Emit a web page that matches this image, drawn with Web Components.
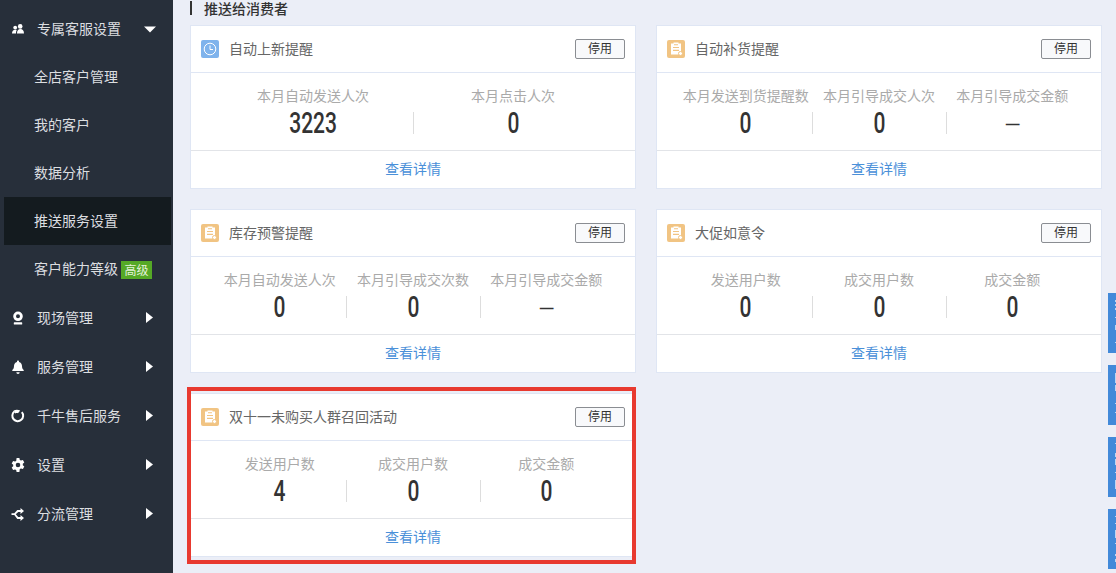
<!DOCTYPE html>
<html lang="zh">
<head>
<meta charset="utf-8">
<title>推送服务设置</title>
<style>
  html, body {
    margin: 0;
    height: 100%;
    overflow: hidden;
    background: #ebeef7;
    font-family: "Noto Sans CJK SC", "Liberation Sans", sans-serif;
  }
</style>
</head>
<body>
<app-shell>
  <side-menu slot="menu">
    <nav-item label="专属客服设置" arrow="down" short>
      <svg slot="icon" viewBox="0 0 14 14"><circle cx="4.200" cy="5.600" r="1.900"/><circle cx="9.200" cy="4.400" r="2.300"/><path d="M1 11.500c0-2.200 1.200-3.800 3.200-3.800 .7 0 1.200.2 1.600.4-.6.8-.8 2-.8 3.400zM6 11.500c0-2.800 1.200-4.500 3.400-4.500s3.600 1.700 3.600 4.500z"/></svg>
    </nav-item>
    <sub-item>全店客户管理</sub-item>
    <sub-item>我的客户</sub-item>
    <sub-item>数据分析</sub-item>
    <sub-item active>推送服务设置</sub-item>
    <sub-item badge="高级">客户能力等级</sub-item>
    <nav-item label="现场管理" arrow="right">
      <svg slot="icon" viewBox="0 0 14 14"><path fill-rule="evenodd" d="M7 .5a4.800 4.800 0 1 1 0 9.600 4.800 4.800 0 0 1 0-9.600zm0 2.800a2 2 0 1 0 0 4 2 2 0 0 0 0-4z"/><rect x="2.800" y="11.300" width="8.400" height="2.200" rx=".6"/></svg>
    </nav-item>
    <nav-item label="服务管理" arrow="right">
      <svg slot="icon" viewBox="0 0 14 14"><path d="M7 .4c.6 0 1 .4 1 1v.5c1.900.5 3 2.100 3 4.200 0 2 .6 3 1.700 4v1H1.300v-1c1.100-1 1.700-2 1.700-4 0-2.100 1.100-3.700 3-4.200v-.5c0-.6.4-1 1-1zM5.300 12.300h3.400a1.700 1.700 0 0 1-3.400 0z"/></svg>
    </nav-item>
    <nav-item label="千牛售后服务" arrow="right">
      <svg slot="icon" viewBox="0 0 14 14"><path fill="none" stroke="#fff" stroke-width="2" d="M3.300 2.600A5.400 5.400 0 1 0 10.800 3.200"/><path d="M2.600 1.500C4.800.4 7.200.4 9.200 1.600L7 4.200C6 3.900 5.200 4 4.200 4.500z"/></svg>
    </nav-item>
    <nav-item label="设置" arrow="right">
      <svg slot="icon" viewBox="0 0 14 14"><path fill-rule="evenodd" d="M5.600 0h2.800l.4 1.900 1.200.7 1.900-.6L13.300 4.400l-1.500 1.300v1.600l1.500 1.300-1.400 2.400-1.900-.6-1.200.7L8.400 14H5.600l-.4-1.900-1.200-.7-1.900.6L.7 9.600l1.500-1.300V6.700L.7 5.400 2.100 3l1.900.6 1.200-.7zM7 4.700a2.300 2.300 0 1 0 0 4.600 2.300 2.300 0 0 0 0-4.600z"/></svg>
    </nav-item>
    <nav-item label="分流管理" arrow="right">
      <svg slot="icon" viewBox="0 0 14 14"><path d="M.5 6.300h2.800l3-3.300h3.200V1l3.500 3-3.500 3V4.900H7.200L4.800 7.200l2.400 2.900h2.300V8l3.500 3-3.500 3v-2H6.300l-3-3.900H.5z"/></svg>
    </nav-item>
  </side-menu>

  <section-title>推送给消费者</section-title>
  <card-grid>
    <push-card title="自动上新提醒" icon="clock">
      <stat-col label="本月自动发送人次" value="3223"></stat-col>
      <stat-col label="本月点击人次" value="0"></stat-col>
    </push-card>
    <push-card title="自动补货提醒">
      <stat-col label="本月发送到货提醒数" value="0"></stat-col>
      <stat-col label="本月引导成交人次" value="0"></stat-col>
      <stat-col label="本月引导成交金额" value="—"></stat-col>
    </push-card>
    <push-card title="库存预警提醒">
      <stat-col label="本月自动发送人次" value="0"></stat-col>
      <stat-col label="本月引导成交次数" value="0"></stat-col>
      <stat-col label="本月引导成交金额" value="—"></stat-col>
    </push-card>
    <push-card title="大促如意令">
      <stat-col label="发送用户数" value="0"></stat-col>
      <stat-col label="成交用户数" value="0"></stat-col>
      <stat-col label="成交金额" value="0"></stat-col>
    </push-card>
    <push-card title="双十一未购买人群召回活动" highlight>
      <stat-col label="发送用户数" value="4"></stat-col>
      <stat-col label="成交用户数" value="0"></stat-col>
      <stat-col label="成交金额" value="0"></stat-col>
    </push-card>
  </card-grid>

  <edge-tabs slot="edge"></edge-tabs>
</app-shell>

<script>
class AppShell extends HTMLElement {
  constructor() {
    super();
    this.attachShadow({ mode: 'open' });
    this.shadowRoot.innerHTML = `
      <style>
        :host {
          display: grid;
          grid-template-columns: 173px 1fr;
          height: 573px;
          overflow: hidden;
        }

        #main {
          padding: 0 14px 0 17px;
        }
      </style>

      <slot name="menu"></slot>
      <div id="main"><slot></slot></div>
      <slot name="edge"></slot>
    `;
  }
}

class SideMenu extends HTMLElement {
  constructor() {
    super();
    this.attachShadow({ mode: 'open' });
    this.shadowRoot.innerHTML = `
      <style>
        :host {
          display: block;
          box-sizing: border-box;
          height: 573px;
          padding-top: 5px;
          background: #272f3a;
        }
      </style>

      <slot></slot>
    `;
  }
}

class NavItem extends HTMLElement {
  constructor() {
    super();
    this.attachShadow({ mode: 'open' });
    const arrow = this.getAttribute('arrow');
    this.shadowRoot.innerHTML = `
      <style>
        :host {
          display: flex;
          align-items: center;
          height: 49px;
          padding-left: 11px;
          color: #dcdee0;
          font-size: 14px;
        }

        :host([short]) {
          height: 48px;
        }

        #icon {
          display: flex;
          width: 14px;
          height: 14px;
          margin-right: 12px;
        }

        ::slotted(svg) {
          width: 14px;
          height: 14px;
          fill: #fff;
        }

        #label {
          flex: 1;
          padding-bottom: 2px;
        }

        #arrow {
          width: 12px;
          height: 11px;
          margin-right: 17px;
          fill: #fff;
        }
      </style>

      <span id="icon"><slot name="icon"></slot></span>
      <span id="label">${this.getAttribute('label')}</span>
      <svg id="arrow" viewBox="0 0 12 11">
        <path d="${arrow === 'down' ? 'M0 2.500h12L6 8.500z' : 'M2 0l7 5.500L2 11z'}"/>
      </svg>
    `;
  }
}

class SubItem extends HTMLElement {
  constructor() {
    super();
    this.attachShadow({ mode: 'open' });
    const badge = this.getAttribute('badge');
    this.shadowRoot.innerHTML = `
      <style>
        :host {
          display: flex;
          align-items: center;
          box-sizing: border-box;
          height: 48px;
          margin: 0 2px 0 4px;
          padding: 0 0 2px 30px;
          color: #dcdee0;
          font-size: 14px;
        }

        :host([active]) {
          background: #141b1f;
        }

        #badge {
          width: 31px;
          height: 18px;
          margin: 4px 0 0 3px;
          background: #55a926;
          color: #e6f2dc;
          font-size: 12px;
          line-height: 17px;
          text-align: center;
        }
      </style>

      <slot></slot>
      ${badge ? `<span id="badge">${badge}</span>` : ''}
    `;
  }
}

class SectionTitle extends HTMLElement {
  constructor() {
    super();
    this.attachShadow({ mode: 'open' });
    this.shadowRoot.innerHTML = `
      <style>
        :host {
          display: flex;
          align-items: center;
          height: 25px;
          padding-bottom: 7px;
          box-sizing: border-box;
          color: #333;
          font-family: "Liberation Sans", "Noto Sans CJK SC", sans-serif;
          font-size: 14px;
          font-weight: 500;
          line-height: 16px;
        }

        #bar {
          width: 2px;
          height: 14px;
          margin: 0 12px 2px 0;
          background: #333;
        }
      </style>

      <span id="bar"></span>
      <slot></slot>
    `;
  }
}

class CardGrid extends HTMLElement {
  constructor() {
    super();
    this.attachShadow({ mode: 'open' });
    this.shadowRoot.innerHTML = `
      <style>
        :host {
          display: grid;
          grid-template-columns: 446px 446px;
          grid-auto-rows: 164px;
          gap: 20px;
        }
      </style>

      <slot></slot>
    `;
  }
}

class PushCard extends HTMLElement {
  constructor() {
    super();
    this.attachShadow({ mode: 'open' });

    const clock = `
      <svg viewBox="0 0 18 18" fill="none" stroke="#fff" stroke-width="1">
        <circle cx="9" cy="9" r="5.800"/>
        <path d="M9 5.500V9.500h3"/>
      </svg>`;
    const note = `
      <svg viewBox="0 0 18 18">
        <path fill="#fff" d="M4 3.500h2.500v-1h5v1H14v11H4z"/>
        <path fill="#f1c483" d="M7 4.300h4v1H7zM6 7h6v1.100H6zM6 9.800h6v1.100H6z"/>
        <circle cx="13.500" cy="13.500" r="2" fill="#fff" stroke="#f1c483"/>
      </svg>`;
    const isClock = this.getAttribute('icon') === 'clock';

    this.shadowRoot.innerHTML = `
      <style>
        :host {
          display: flex;
          flex-direction: column;
          position: relative;
          box-sizing: border-box;
          border: 1px solid #dfe6f4;
          background: #fff;
        }

        :host([highlight])::after {
          content: '';
          position: absolute;
          top: -7px;
          left: -4px;
          width: 449px;
          height: 177px;
          box-sizing: border-box;
          border: 4px solid #e8392f;
          pointer-events: none;
        }

        #header {
          display: flex;
          align-items: center;
          height: 46px;
          padding: 0 10px;
          border-bottom: 1px solid #dfe6f4;
          color: #666;
          font-size: 14px;
        }

        #icon {
          width: 18px;
          height: 18px;
          margin-right: 10px;
          border-radius: 2px;
          background: ${isClock ? '#7fb3ec' : '#f1c483'};
        }

        #icon svg {
          display: block;
        }

        #title {
          flex: 1;
          padding-bottom: 2px;
        }

        #btn-stop {
          box-sizing: border-box;
          width: 50px;
          height: 20px;
          padding: 0 0 2px;
          border: 1px solid #8a8d92;
          border-radius: 2px;
          background: #f8f9fb;
          color: #333;
          font: inherit;
          font-size: 12px;
          line-height: 16px;
        }

        #body {
          flex: 1;
          display: flex;
          padding: 13px 22px 0;
        }

        #footer {
          height: 37px;
          border-top: 1px solid #e2e4e8;
          color: #4a90d9;
          font-size: 14px;
          line-height: 35px;
          text-align: center;
        }
      </style>

      <header id="header">
        <span id="icon">${isClock ? clock : note}</span>
        <span id="title">${this.getAttribute('title')}</span>
        <button type="button" id="btn-stop">停用</button>
      </header>
      <div id="body"><slot></slot></div>
      <footer id="footer">查看详情</footer>
    `;
  }
}

class StatCol extends HTMLElement {
  constructor() {
    super();
    this.attachShadow({ mode: 'open' });
    const value = this.getAttribute('value');
    this.shadowRoot.innerHTML = `
      <style>
        :host {
          display: block;
          flex: 1 1 0;
          min-width: 0;
          text-align: center;
        }

        #label {
          height: 18px;
          margin-bottom: 8px;
          color: #aaa;
          font-size: 14px;
          line-height: 18px;
          white-space: nowrap;
        }

        #value {
          height: 22px;
          color: #333;
          line-height: 22px;
        }

        :host(:not(:first-child)) #value {
          border-left: 1px solid #ddd;
        }

        #value span {
          display: inline-block;
          font-family: Roboto, "Liberation Sans", sans-serif;
          font-size: 30px;
          font-weight: 500;
          transform: scaleX(0.7);
        }

        #value span.dash {
          font-weight: 300;
          transform: translateY(2px) scaleX(0.7);
        }
      </style>

      <div id="label">${this.getAttribute('label')}</div>
      <div id="value"><span class="${value === '—' ? 'dash' : ''}">${value}</span></div>
    `;
  }
}

// tabs are cut off by the right edge of the window, only a sliver of their
// labels shows: [top, height] of each fleck, from the top of its tab
const TAB_MARKS = [
  [[7, 2], [11, 2], [15, 2], [24, 1], [32, 5], [49, 1]],
  [[8, 10], [20, 6], [38, 1], [47, 1]],
  [[6, 1], [16, 4], [22, 6], [35, 1], [43, 9]],
  [[7, 1], [14, 1], [21, 8], [34, 1], [45, 2], [50, 3]]
];

class EdgeTabs extends HTMLElement {
  constructor() {
    super();
    this.attachShadow({ mode: 'open' });
    const tabs = TAB_MARKS.map((marks) => {
      const flecks = marks
        .map(([top, height]) => `<i style="top:${top}px;height:${height}px"></i>`)
        .join('');
      return `<div class="tab">${flecks}</div>`;
    }).join('');
    this.shadowRoot.innerHTML = `
      <style>
        :host {
          display: flex;
          flex-direction: column;
          gap: 12px;
          position: absolute;
          top: 293px;
          right: 0;
          width: 8px;
          overflow: hidden;
        }

        .tab {
          position: relative;
          height: 60px;
          background: #4289d9;
        }

        .tab i {
          position: absolute;
          right: 0;
          width: 1px;
          background: rgba(255, 255, 255, 0.65);
        }
      </style>

      ${tabs}
    `;
  }
}

customElements.define('app-shell', AppShell);
customElements.define('side-menu', SideMenu);
customElements.define('nav-item', NavItem);
customElements.define('sub-item', SubItem);
customElements.define('section-title', SectionTitle);
customElements.define('card-grid', CardGrid);
customElements.define('push-card', PushCard);
customElements.define('stat-col', StatCol);
customElements.define('edge-tabs', EdgeTabs);
</script>
</body>
</html>
